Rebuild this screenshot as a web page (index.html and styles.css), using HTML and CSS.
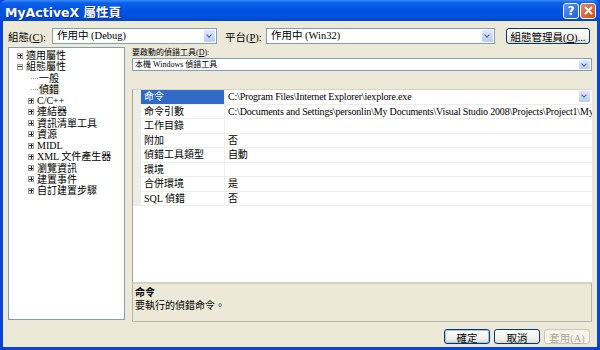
FILE: index.html
```html
<!DOCTYPE html>
<html lang="zh-Hant">
<head>
  <meta charset="UTF-8">
  <title>MyActiveX 屬性頁</title>
  <link rel="stylesheet" href="styles.css">
</head>
<body>
  <div class="window">
    <!-- Title bar -->
    <div class="titlebar">
      <span class="title">MyActiveX 屬性頁</span>
      <div class="caption">
        <span class="cap help">?</span>
        <span class="cap close">
          <svg width="9" height="9" viewBox="0 0 9 9"><path d="M1 1L8 8M8 1L1 8" stroke="#fff" stroke-width="2"/></svg>
        </span>
      </div>
    </div>

    <div class="body">
      <!-- Configuration row -->
      <div class="toolbar">
        <span class="lbl lbl-conf">組態(<u>C</u>):</span>
        <div class="combo combo-conf">作用中 (Debug)<span class="drop"></span></div>
        <span class="lbl lbl-plat">平台(<u>P</u>):</span>
        <div class="combo combo-plat">作用中 (Win32)<span class="drop"></span></div>
        <button class="btn btn-mgr">組態管理員(<u>O</u>)...</button>
      </div>

      <div class="main">
        <!-- Tree -->
        <div class="tree">
          <div class="node lvl1"><span class="exp plus"></span>適用屬性</div>
          <div class="node lvl1"><span class="exp"></span>組態屬性</div>
          <div class="node lvl2 leaf"><span class="dots"></span><span class="txt">一般</span></div>
          <div class="node lvl2 leaf"><span class="dots"></span><span class="txt sel">偵錯</span></div>
          <div class="node lvl2"><span class="exp plus"></span>C/C++</div>
          <div class="node lvl2"><span class="exp plus"></span>連結器</div>
          <div class="node lvl2"><span class="exp plus"></span>資訊清單工具</div>
          <div class="node lvl2"><span class="exp plus"></span>資源</div>
          <div class="node lvl2"><span class="exp plus"></span>MIDL</div>
          <div class="node lvl2"><span class="exp plus"></span>XML 文件產生器</div>
          <div class="node lvl2"><span class="exp plus"></span>瀏覽資訊</div>
          <div class="node lvl2"><span class="exp plus"></span>建置事件</div>
          <div class="node lvl2"><span class="exp plus"></span>自訂建置步驟</div>
        </div>

        <!-- Property pages -->
        <div class="pane">
          <div class="small-lbl">要啟動的偵錯工具(<u>D</u>):</div>
          <div class="combo combo-dbg">本機 Windows 偵錯工具<span class="drop"></span></div>

          <div class="grid">
            <div class="row"><span class="gut"></span><span class="name cur">命令</span><span class="val">C:\Program Files\Internet Explorer\iexplore.exe<span class="drop drop-cell"></span></span></div>
            <div class="row"><span class="gut"></span><span class="name">命令引數</span><span class="val">C:\Documents and Settings\personlin\My Documents\Visual Studio 2008\Projects\Project1\My</span></div>
            <div class="row"><span class="gut"></span><span class="name">工作目錄</span><span class="val"></span></div>
            <div class="row"><span class="gut"></span><span class="name">附加</span><span class="val">否</span></div>
            <div class="row"><span class="gut"></span><span class="name">偵錯工具類型</span><span class="val">自動</span></div>
            <div class="row"><span class="gut"></span><span class="name">環境</span><span class="val"></span></div>
            <div class="row"><span class="gut"></span><span class="name">合併環境</span><span class="val">是</span></div>
            <div class="row"><span class="gut"></span><span class="name">SQL 偵錯</span><span class="val">否</span></div>
          </div>

          <div class="desc">
            <div class="desc-title">命令</div>
            <div class="desc-text">要執行的偵錯命令。</div>
          </div>
        </div>
      </div>

      <!-- Dialog buttons -->
      <div class="footer">
        <button class="btn btn-ok">確定</button>
        <button class="btn">取消</button>
        <button class="btn" disabled>套用(<u>A</u>)</button>
      </div>
    </div>
  </div>
</body>
</html>
```

FILE: styles.css
```css
* {
  box-sizing: border-box;
}
body {
  margin: 0;
  width: 600px;
  height: 350px;
  overflow: hidden;
  font-family: "Liberation Serif", "Noto Sans CJK TC", serif;
  font-size: 10px;
  color: #000;
}
u {
  text-decoration: underline;
}
.window {
  width: 600px;
  height: 350px;
  background: #0842d6;
  padding: 0 3px 3px 3px;
  display: flex;
  flex-direction: column;
}

/* title bar */
.titlebar {
  height: 21px;
  margin: 0 -3px;
  padding: 0 4px 0 5px;
  display: flex;
  align-items: center;
  background: linear-gradient(#3a8cff 0, #0a5fe8 3px, #0054e3 10px, #0050dc 17px, #0044c8 21px);
  border-radius: 6px 6px 0 0;
}
.title {
  flex: 1;
  color: #fff;
  font-family: "DejaVu Sans", "Noto Sans CJK TC", sans-serif;
  font-weight: bold;
  font-size: 12.5px;
  text-shadow: 1px 1px 0 #0a2a8a;
  padding-top: 1px;
}
.caption {
  display: flex;
  gap: 1px;
}
.cap {
  width: 16px;
  height: 16px;
  border: 1px solid #fff;
  border-radius: 3px;
  display: flex;
  align-items: center;
  justify-content: center;
}
.help {
  background: linear-gradient(135deg, #5b93f5, #2160e0);
  color: #fff;
  font-family: "DejaVu Sans", sans-serif;
  font-weight: bold;
  font-size: 12px;
}
.close {
  background: linear-gradient(135deg, #e8865c, #d14a1e);
}

/* client area */
.body {
  flex: 1;
  background: #ece9d8;
  padding: 7px 5px 3px 5px;
  display: flex;
  flex-direction: column;
}
.toolbar {
  height: 16px;
  display: flex;
  align-items: center;
}
.lbl {
  font-size: 10.5px;
  flex: none;
}
.lbl-conf {
  width: 44px;
}
.lbl-plat {
  margin-left: 8px;
  width: 41px;
}
.combo {
  position: relative;
  height: 16px;
  background: #fff;
  border: 1px solid #7f9db9;
  padding: 0 0 0 4px;
  line-height: 14px;
  font-size: 10.5px;
  white-space: nowrap;
  flex: none;
}
.combo-conf {
  width: 165px;
}
.combo-plat {
  width: 229px;
}
.drop {
  position: absolute;
  right: 1px;
  top: 1px;
  bottom: 1px;
  width: 11px;
  background: linear-gradient(#dfe8fd, #b9cbf5);
  border-radius: 1px;
}
.drop::after {
  content: "";
  position: absolute;
  left: 3px;
  top: 50%;
  width: 3px;
  height: 3px;
  margin-top: -3px;
  border-right: 1.5px solid #4d6185;
  border-bottom: 1.5px solid #4d6185;
  transform: rotate(45deg);
}
.btn {
  font-family: inherit;
  font-size: 10.5px;
  height: 16px;
  padding: 0;
  background: linear-gradient(#ffffff, #f0efe8 70%, #dcd9cd);
  border: 1px solid #003c74;
  border-radius: 3px;
  color: #000;
}
.btn-mgr {
  margin-left: 11px;
  width: 84px;
  flex: none;
}

/* tree + pane */
.main {
  margin-top: 3px;
  height: 275px;
  display: flex;
  gap: 7px;
}
.tree {
  width: 117px;
  flex: none;
  height: 273px;
  background: #fff;
  border: 1px solid #7f9db9;
  padding-top: 2px;
  font-size: 10px;
}
.node {
  height: 11.25px;
  line-height: 11.25px;
  display: flex;
  align-items: center;
  white-space: nowrap;
}
.lvl1 {
  padding-left: 8px;
}
.lvl2 {
  padding-left: 19px;
}
.exp {
  position: relative;
  width: 6px;
  height: 6px;
  border: 1px solid #9a9a9a;
  background: #f4f4f0;
  margin-right: 3px;
  flex: none;
}
.exp::before {
  content: "";
  position: absolute;
  left: 0;
  top: 1.5px;
  width: 4px;
  height: 1px;
  background: #222;
}
.plus::after {
  content: "";
  position: absolute;
  left: 1.5px;
  top: 0;
  width: 1px;
  height: 4px;
  background: #222;
}
.dots {
  width: 7px;
  border-top: 1px dotted #a0a0a0;
  margin-left: 3px;
}
.txt {
  padding: 0 1px;
}
.sel {
  background: #ece9d8;
}

.pane {
  flex: 1;
  min-width: 0;
  display: flex;
  flex-direction: column;
}
.small-lbl {
  height: 11px;
  font-size: 8px;
  line-height: 11px;
}
.combo-dbg {
  height: 13px;
  line-height: 11px;
  font-size: 8px;
  padding-left: 2px;
}
.grid {
  margin-top: 18px;
  height: 194px;
  background: #fff;
  border-left: 1px solid #a5a396;
  border-top: 1px solid #d6d3c5;
  overflow: hidden;
}
.row {
  display: flex;
  height: 14.5px;
}
.gut {
  width: 8px;
  background: #eeede5;
  flex: none;
}
.name, .val {
  border-bottom: 1px solid #ededea;
  line-height: 13.5px;
  padding-left: 3px;
  white-space: nowrap;
  overflow: hidden;
}
.name {
  width: 84px;
  flex: none;
  border-right: 1px solid #ededea;
}
.name.cur {
  background: #316ac5;
  color: #fff;
}
.val {
  position: relative;
  flex: 1;
  min-width: 0;
  letter-spacing: -0.18px;
}
.drop-cell {
  right: 2px;
  top: 1px;
  bottom: 2px;
}
.desc {
  height: 40px;
  border: 1px solid #b6b3a5;
  border-top: 2px solid #d6d3c5;
  padding: 2px 2px;
  font-size: 10px;
  line-height: 13px;
}
.desc-title {
  font-weight: bold;
}

/* buttons */
.footer {
  margin-top: 7px;
  display: flex;
  justify-content: flex-end;
  gap: 4px;
  padding-right: 2px;
}
.footer .btn {
  width: 46px;
  height: 15px;
}
.btn-ok {
  box-shadow: inset 0 0 0 1px #a8c4f0;
}
.btn:disabled {
  border-color: #c9c7ba;
  background: #f5f4ea;
  color: #aca899;
}
```
